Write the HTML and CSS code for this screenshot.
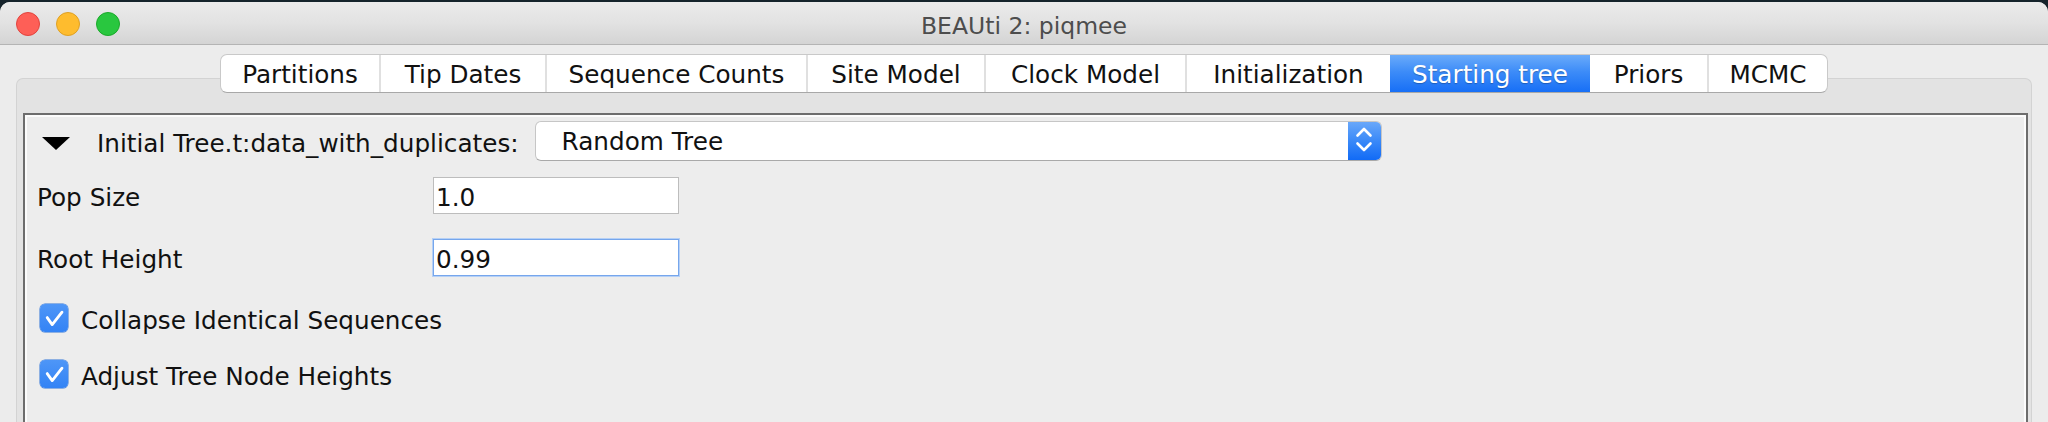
FILE: index.html
```html
<!DOCTYPE html>
<html>
<head>
<meta charset="utf-8">
<title>BEAUti 2: piqmee</title>
<link rel="stylesheet" href="styles.css">
</head>
<body>
<div class="window">
  <div class="titlebar">
    <div class="lights">
      <span class="light red"></span>
      <span class="light yellow"></span>
      <span class="light green"></span>
    </div>
    <div class="title">BEAUti 2: piqmee</div>
    <div class="spacer"></div>
  </div>

  <div class="tabs-row">
    <div class="tabs">
      <div class="tab t-partitions">Partitions</div>
      <div class="tab t-tipdates">Tip Dates</div>
      <div class="tab t-seqcounts">Sequence Counts</div>
      <div class="tab t-site">Site Model</div>
      <div class="tab t-clock">Clock Model</div>
      <div class="tab t-init">Initialization</div>
      <div class="tab t-start selected">Starting tree</div>
      <div class="tab t-priors after-selected">Priors</div>
      <div class="tab t-mcmc">MCMC</div>
    </div>
  </div>

  <div class="tabbox">
    <div class="panel">
      <div class="row head">
        <span class="arrow"></span>
        <span class="text head-label">Initial Tree.t:data_with_duplicates:</span>
        <div class="combo">
          <span class="combo-text">Random Tree</span>
          <span class="stepper">
            <svg width="33" height="40" viewBox="0 0 33 40">
              <path d="M9.5 15.5 L16 9 L22.5 15.5" fill="none" stroke="#fff" stroke-width="2.6" stroke-linecap="round" stroke-linejoin="round"/>
              <path d="M9.5 23.5 L16 30 L22.5 23.5" fill="none" stroke="#fff" stroke-width="2.6" stroke-linecap="round" stroke-linejoin="round"/>
            </svg>
          </span>
        </div>
      </div>

      <div class="row field-row first">
        <span class="text label">Pop Size</span>
        <div class="field"><span class="text">1.0</span></div>
      </div>

      <div class="row field-row second">
        <span class="text label">Root Height</span>
        <div class="field focused"><span class="text">0.99</span></div>
      </div>

      <div class="row check-row first-check">
        <span class="checkbox">
          <svg width="28" height="28" viewBox="0 0 28 28">
            <path d="M7.2 13.6 L12.2 20.6 L22 8.2" fill="none" stroke="#fff" stroke-width="2.8" stroke-linecap="round" stroke-linejoin="round"/>
          </svg>
        </span>
        <span class="text check-label">Collapse Identical Sequences</span>
      </div>

      <div class="row check-row">
        <span class="checkbox">
          <svg width="28" height="28" viewBox="0 0 28 28">
            <path d="M7.2 13.6 L12.2 20.6 L22 8.2" fill="none" stroke="#fff" stroke-width="2.8" stroke-linecap="round" stroke-linejoin="round"/>
          </svg>
        </span>
        <span class="text check-label">Adjust Tree Node Heights</span>
      </div>
    </div>
  </div>
</div>
</body>
</html>
```

FILE: styles.css
```css
* {
  box-sizing: border-box;
}

html, body {
  margin: 0;
  padding: 0;
  height: 422px;
  overflow: hidden;
  background: #15232b;
}

body {
  font-family: "DejaVu Sans", "Liberation Sans", sans-serif;
  font-size: 24.7px;
  color: #111;
}

.window {
  margin-top: 2px;
  height: 420px;
  background: #ececec;
  border-radius: 10px 10px 0 0;
  overflow: hidden;
}

/* ---------- title bar ---------- */
.titlebar {
  height: 43px;
  display: grid;
  grid-template-columns: 1fr auto 1fr;
  align-items: center;
  background: linear-gradient(to bottom, #ebebeb 0%, #e2e2e2 50%, #d4d4d4 100%);
  border-bottom: 1px solid #b4b4b4;
}

.lights {
  display: flex;
  gap: 16px;
  padding-left: 16px;
  padding-top: 2px;
}

.light {
  width: 24px;
  height: 24px;
  border-radius: 50%;
  display: block;
}

.light.red {
  background: #fe5f57;
  border: 1px solid #e1443e;
}

.light.yellow {
  background: #febc2e;
  border: 1px solid #dea024;
}

.light.green {
  background: #29c73f;
  border: 1px solid #1ba92a;
}

.title {
  font-size: 23.5px;
  color: #4d4d4d;
  padding-top: 5px;
}

/* ---------- tabs ---------- */
.tabs-row {
  display: flex;
  justify-content: center;
  margin-top: 9px;
  margin-bottom: -15px;
  position: relative;
  z-index: 1;
}

.tabs {
  display: flex;
  height: 39px;
  background: #fff;
  border: 1px solid #c9c9c9;
  border-bottom-color: #a8a8a8;
  border-radius: 7px;
  overflow: hidden;
}

.tab {
  display: flex;
  align-items: center;
  justify-content: center;
  padding-top: 2px;
  color: #111;
  border-left: 2px solid #e0e0e0;
  white-space: nowrap;
}

.tab.t-partitions { border-left: none; width: 158px; }
.tab.t-tipdates { width: 166px; }
.tab.t-seqcounts { width: 261px; }
.tab.t-site { width: 178px; }
.tab.t-clock { width: 201px; }
.tab.t-init { width: 205px; }
.tab.t-start { width: 200px; }
.tab.t-priors { width: 117px; }
.tab.t-mcmc { width: 120px; }

.tab.selected {
  border-left: none;
  color: #fff;
  background: linear-gradient(to bottom, #6aabfa 0%, #3d8cf8 45%, #176ff6 100%);
  text-shadow: 0 1px 1px rgba(0, 0, 0, 0.25);
}

.tab.after-selected {
  border-left: none;
}

/* ---------- tab content box ---------- */
.tabbox {
  margin: 0 16px;
  height: 360px;
  background: #e3e3e3;
  border: 1px solid #d3d3d3;
  border-bottom: none;
  border-radius: 7px 7px 0 0;
  padding: 34px 3px 0 6px;
}

.panel {
  height: 400px;
  background: #ededed;
  border: 2px solid #6d6d6d;
  box-shadow: inset 0 0 0 2px #fcfcfc;
  padding-top: 6px;
}

.row {
  display: flex;
  align-items: center;
}

.text {
  padding-top: 4px;
  white-space: nowrap;
}

/* header row */
.head {
  height: 40px;
}

.arrow {
  width: 0;
  height: 0;
  margin-left: 17px;
  margin-top: 5px;
  border-left: 14px solid transparent;
  border-right: 14px solid transparent;
  border-top: 13px solid #000;
}

.head-label {
  margin-left: 27px;
}

.combo {
  margin-left: 16px;
  width: 847px;
  height: 40px;
  display: flex;
  align-items: center;
  background: #fff;
  border: 1px solid #c6c6c6;
  border-bottom-color: #a9a9a9;
  border-radius: 6px;
  overflow: hidden;
}

.combo-text {
  flex: 1;
  padding-left: 26px;
  color: #111;
}

.stepper {
  width: 33px;
  height: 40px;
  display: block;
  background: linear-gradient(to bottom, #6ba9fa 0%, #3a89f8 50%, #0f69f6 100%);
}

.stepper svg {
  display: block;
  margin-top: -1px;
}

/* field rows */
.field-row {
  height: 37px;
}

.field-row.first {
  margin-top: 16px;
}

.field-row.second {
  margin-top: 25px;
}

.label {
  width: 408px;
  padding-left: 12px;
}

.field {
  width: 246px;
  height: 37px;
  display: flex;
  align-items: center;
  background: #fff;
  border: 1px solid #bdbdbd;
  padding-left: 2px;
}

.field.focused {
  border: 1px solid #76a6ec;
  box-shadow: 0 0 0 1px #b5d0f6;
}

/* checkbox rows */
.check-row {
  height: 28px;
  margin-top: 28px;
}

.checkbox {
  width: 28px;
  height: 28px;
  margin-left: 15px;
  display: block;
  border-radius: 5px;
  background: linear-gradient(to bottom, #4e96f7 0%, #3383f5 100%);
  box-shadow: 0 0 0 0.5px #2f74d8;
}

.checkbox svg {
  display: block;
}

.check-label {
  margin-left: 13px;
}
```
